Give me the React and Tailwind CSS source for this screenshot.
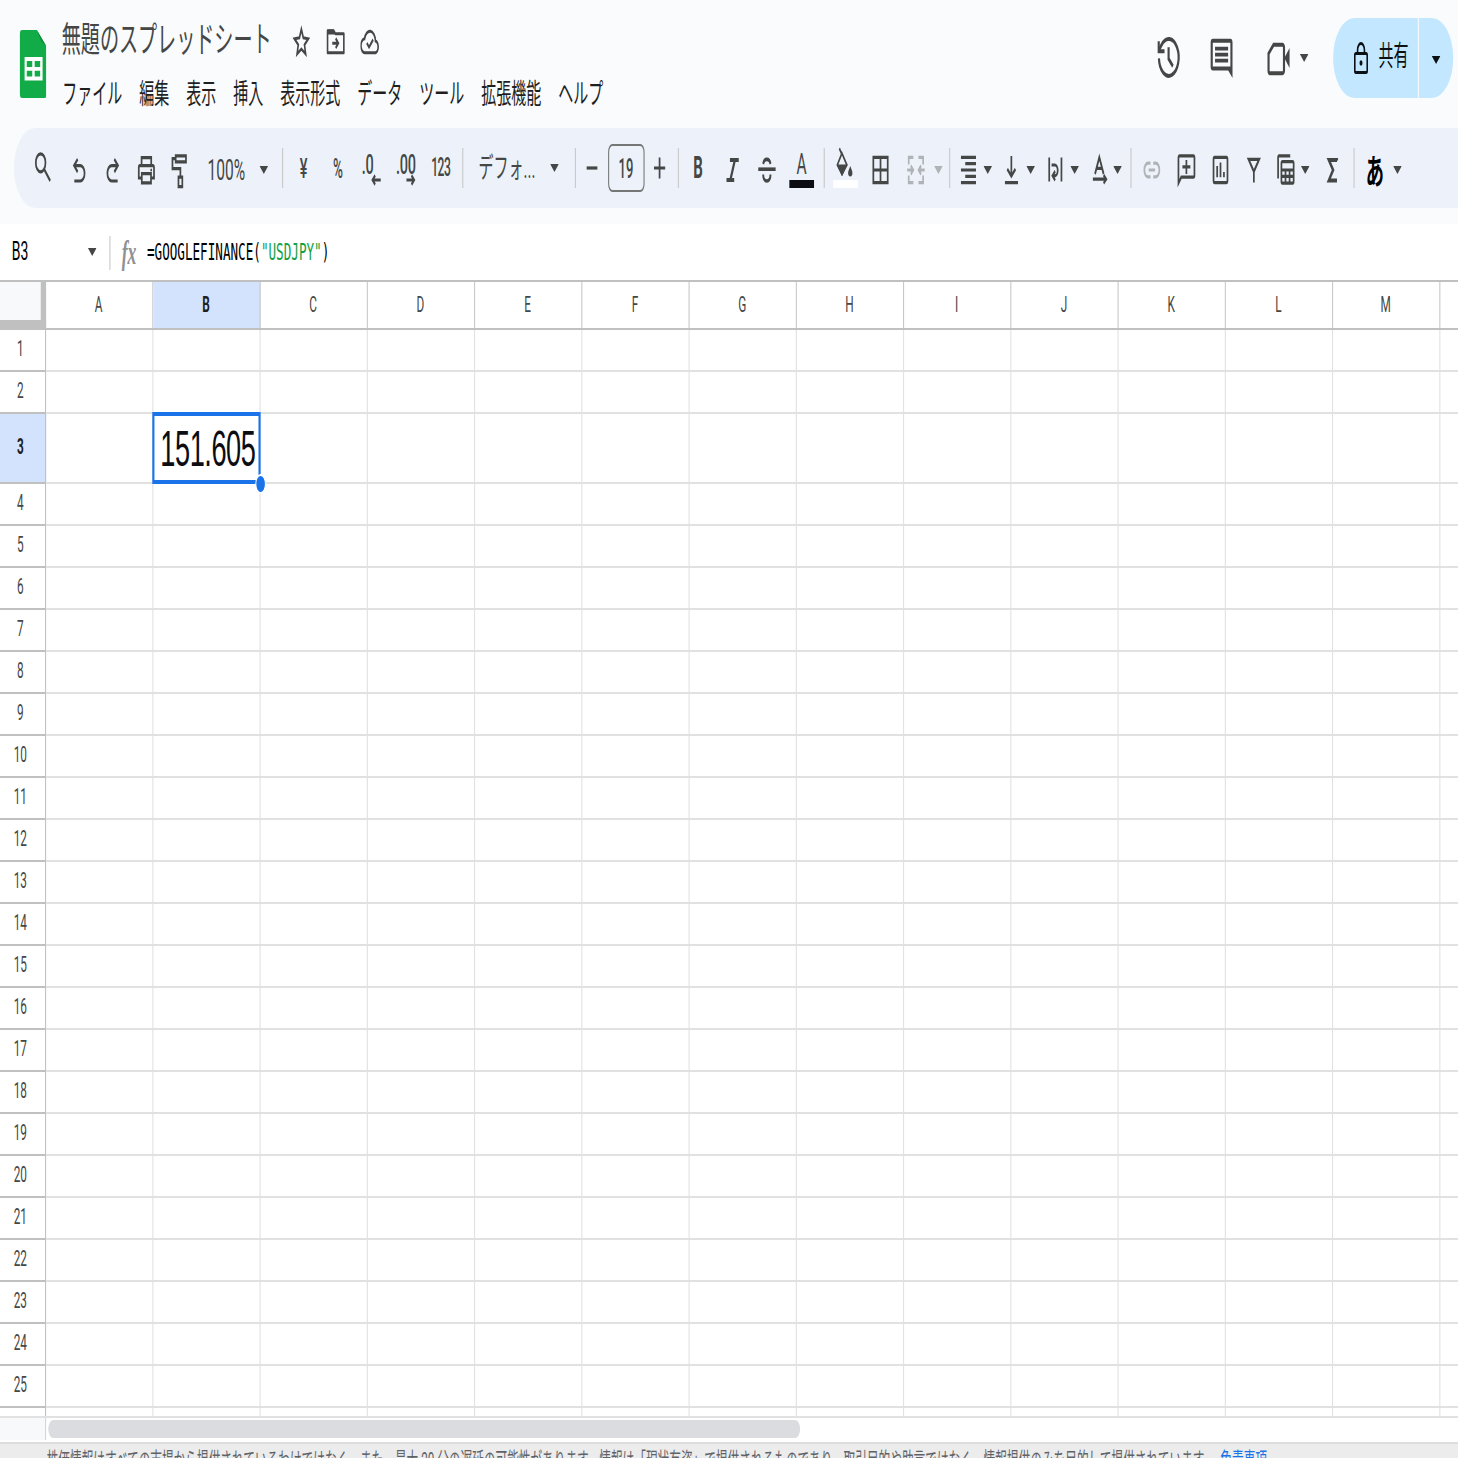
const columns = ['A', 'B', 'C', 'D', 'E', 'F', 'G', 'H', 'I', 'J', 'K', 'L', 'M', '']
const rows = Array.from({ length: 25 }, (_, i) => i + 1)
const menus = ['ファイル', '編集', '表示', '挿入', '表示形式', 'データ', 'ツール', '拡張機能', 'ヘルプ']

function Caret({ className = '' }) {
    return (
        <svg className={`h-1 w-2 shrink-0 ${className}`} viewBox="0 0 8 4" preserveAspectRatio="none" fill="currentColor">
            <path d="M0 0h8L4 4z" />
        </svg>
    )
}

function Divider({ className = '' }) {
    return <div className={`h-5 w-px shrink-0 bg-[#c7c7c7] ${className}`} />
}

// 20x20 stroked toolbar icon
function Tool({ className = '', width = 1.6, children }) {
    return (
        <svg
            className={`h-5 w-5 shrink-0 overflow-visible ${className}`}
            viewBox="0 0 20 20"
            fill="none"
            stroke="currentColor"
            strokeWidth={width}
        >
            {children}
        </svg>
    )
}

function Label({ className = '', children }) {
    return <div className={`flex h-5 shrink-0 items-center justify-center whitespace-nowrap ${className}`}>{children}</div>
}

function Header() {
    return (
        <header className="flex h-16 text-[#444746]">
            <svg className="mt-[15px] ml-[17.7px] h-[34px] w-[25.6px] shrink-0" viewBox="0 0 25 34" preserveAspectRatio="none">
                <path d="M2.5 0H16l9 8.5V32a2 2 0 0 1-2 2H2.5a2 2 0 0 1-2-2V2a2 2 0 0 1 2-2z" fill="#11ab47" />
                <path d="M16 0l9 8.5-5-3z" fill="#0b8a38" />
                <path d="M4.8 13.5h16.4v11.7H4.8zM6.8 15.5v3h5v-3zm7.2 0v3h5v-3zm-7.2 4.9v2.9h5v-2.9zm7.2 0v2.9h5v-2.9z" fill="#fff" fillRule="evenodd" />
            </svg>

            <div className="ml-[14.3px] pt-[5px]">
                <div className="flex h-7 items-center">
                    <h1 className="mt-[2px] w-[197.5px] text-[17.8px] whitespace-nowrap">無題のスプレッドシート</h1>
                    <svg className="mt-1 ml-[17px] h-[18px] w-[18px]" viewBox="0 0 18 18" fill="none" stroke="currentColor" strokeWidth="1.5">
                        <path d="M9 2.6l1.8 4.3 4.6.5-3.5 3 1.1 4.6L9 12.5 5 15l1.1-4.6-3.5-3 4.6-.5z" />
                    </svg>
                    <svg className="mt-1 ml-[14px] h-[18px] w-[18px]" viewBox="0 0 18 18" fill="none" stroke="currentColor" strokeWidth="1.5">
                        <path d="M1.4 4.4V3.4h5.8l1.5 1.5h7.9v9.5H1.4z" strokeLinejoin="round" />
                        <path d="M1.2 2.8h6l1.3 2.4H1.2z" fill="currentColor" stroke="none" />
                        <path d="M5.8 9.6h5.4M9 7.2l2.4 2.4L9 12" />
                    </svg>
                    <svg className="mt-1 ml-[14px] h-[18px] w-[18px]" viewBox="0 0 18 18" fill="none" stroke="currentColor" strokeWidth="1.5">
                        <path d="M4.2 14.4a3.5 3.5 0 0 1-.3-7 5.2 5.2 0 0 1 10.2 1.1 3 3 0 0 1 .1 5.9z" />
                        <path d="M6 9.5l2.1 2.1 3.8-3.8" />
                    </svg>
                </div>
                <nav className="ml-[0.5px] flex h-[27px] items-center gap-[15.8px] text-sm whitespace-nowrap text-[#1f1f1f]">
                    {menus.map((menu) => (
                        <span key={menu}>{menu}</span>
                    ))}
                </nav>
            </div>

            <div className="mt-[9px] mr-[4.7px] ml-auto flex h-10 items-center">
                {/* History */}
                <svg className="h-6 w-6" viewBox="0 0 24 24" fill="none" stroke="currentColor" strokeWidth="2">
                    <path d="M2.6 12.2a9.2 9.2 0 1 0 2.3-6.6L2.4 8.3" />
                    <path d="M2.4 3.6v5h5.4M11.6 6.6v5.8l4 3.7" />
                </svg>
                {/* Comments */}
                <svg className="ml-[25px] h-6 w-6" viewBox="0 0 24 24" fill="currentColor">
                    <path d="M3.8 2.4h16.4a2 2 0 0 1 2 2V22l-4-3.8H3.8a2 2 0 0 1-2-2V4.4a2 2 0 0 1 2-2zm0 2v11.8h16.4V4.4z" fillRule="evenodd" />
                    <path d="M5.9 6.4h12.2v1.9H5.9zM5.9 9.4h12.2v1.9H5.9zM5.9 12.4h12.2v1.9H5.9z" />
                </svg>
                {/* Meet */}
                <svg className="ml-[29.5px] h-6 w-6" viewBox="0 0 24 24" fill="none" stroke="currentColor" strokeWidth="2">
                    <path d="M7.5 5.4h8.3a1.4 1.4 0 0 1 1.4 1.4v11.4a1.4 1.4 0 0 1-1.4 1.4H4a1.2 1.2 0 0 1-1.2-1.2V9.8z" />
                    <path d="M17.5 12l4.9-5v10z" fill="currentColor" stroke="none" />
                </svg>
                <Caret className="ml-[8px]" />
                <button className="ml-[23px] flex h-10 w-[112px] items-center rounded-full bg-[#c2e7ff] text-sm text-[#0b1015]">
                    <svg className="mb-px ml-[17.5px] h-4 w-4" viewBox="0 0 16 16" fill="none" stroke="currentColor" strokeWidth="1.5">
                        <rect x="2.2" y="5.7" width="11.6" height="9.5" rx="1" />
                        <path d="M4.8 5.7V4a3.2 3.2 0 0 1 6.4 0v1.7" />
                        <circle cx="8" cy="10.5" r="1.4" fill="currentColor" stroke="none" />
                    </svg>
                    <span className="mb-[1.5px] ml-[8.5px] w-[28px] whitespace-nowrap">共有</span>
                    <span className="ml-[9px] h-full w-px bg-[#f9fbfd]" />
                    <Caret className="mt-px ml-[12px]" />
                </button>
            </div>
        </header>
    )
}

function Toolbar() {
    return (
        <div className="ml-[13px] flex h-10 items-center rounded-l-full bg-[#edf2fa] font-[Roboto,'Noto_Sans_CJK_JP',sans-serif] text-[#444746]">
            <Tool className="ml-[16.6px]">
                <circle cx="7.9" cy="7.4" r="4.5" />
                <path d="M11.1 10.6l5.7 5.8" />
            </Tool>
            <Tool className="ml-[14px]">
                <path d="M5.3 16.5h5.7a3.85 3.85 0 0 0 0-7.7H5M8.4 5.6L5.1 8.8l3.3 3.2" />
            </Tool>
            <Tool className="ml-[11.2px]">
                <path d="M14.7 16.5H9a3.85 3.85 0 0 1 0-7.7h6M11.6 5.6l3.3 3.2-3.3 3.2" />
            </Tool>
            <Tool className="ml-[11.2px]">
                <path d="M6 8.6V4.8h9v3.8M6.1 15H3.4v-5.2a1 1 0 0 1 1-1h12.2a1 1 0 0 1 1 1V15h-2.7" />
                <path d="M6.2 12.8h8.6v4.6H6.2z" />
                <circle cx="15" cy="11" r=".8" fill="currentColor" stroke="none" />
            </Tool>
            <Tool className="ml-[11.5px]">
                <path d="M6.8 3.9h9.6v3H6.8zM6.5 5.3H3.8v5h7.4v4.2M9.4 14.6h3.6v4.7H9.4z" />
            </Tool>
            <Label className="mt-[3px] ml-[15px] w-[37px] text-[14.5px]">100%</Label>
            <Caret className="mt-px ml-[12.8px]" />
            <Divider className="ml-[13.1px]" />

            <Label className="ml-[8.8px] w-5 text-[13.5px] font-medium">¥</Label>
            <Label className="ml-[11.8px] w-5 text-[14px] font-medium">
                <span className="scale-x-90">%</span>
            </Label>
            <div className="relative ml-[11.8px] h-5 w-5">
                <span className="absolute top-0 left-[0.5px] text-[13.5px] leading-[17px] font-medium tracking-[-0.3px]">.0</span>
                <Tool className="absolute inset-0">
                    <path d="M18 16H10.5M12.8 13.7L10.4 16l2.4 2.3" />
                </Tool>
            </div>
            <div className="relative ml-[12px] h-5 w-5">
                <span className="absolute top-0 left-[0.5px] text-[13.5px] leading-[17px] font-medium tracking-[-0.3px]">.00</span>
                <Tool className="absolute inset-0">
                    <path d="M10 16h7M14.7 13.7l2.4 2.3-2.4 2.3" />
                </Tool>
            </div>
            <Label className="mt-px ml-[11.7px] w-5 text-[12.5px] font-medium tracking-[-0.5px]">
                <span className="scale-x-90">123</span>
            </Label>
            <Divider className="ml-[10.5px]" />

            <Label className="ml-[15.2px] w-[51px] text-sm">デフォ...</Label>
            <Caret className="ml-[14.4px]" />
            <Divider className="ml-[15px]" />

            <Tool className="ml-[5.2px]">
                <path d="M5 10h10" />
            </Tool>
            <Label className="ml-[5.3px] h-6 w-[34px] rounded border border-[#747775] text-[13.5px] font-medium">
                <span className="scale-x-90">19</span>
            </Label>
            <Tool className="ml-[4px]">
                <path d="M4.8 10h10.4M10 4.8v10.4" />
            </Tool>
            <Divider className="ml-[6.9px]" />

            <Label className="mt-[2px] ml-[8.5px] w-5 text-[15.5px] font-bold">
                <span className="scale-x-90">B</span>
            </Label>
            <Tool className="ml-[11.6px]" width={2}>
                <path d="M7.6 6h8.2M4.4 16h7.2M12.2 6L8 16" />
            </Tool>
            <Tool className="ml-[11.8px]" width={1.8}>
                <path d="M2 10.6h16.2" />
                <path d="M13.4 8a3.5 3 0 0 0-6.8 0M6.6 13.2c0 2 1.3 3.3 3.4 3.3s3.4-1.3 3.4-3.3" />
            </Tool>
            <div className="ml-[10.7px] flex h-5 w-6 flex-col items-center justify-between">
                <span className="pt-px text-[14.5px] leading-[16px]">A</span>
                <span className="-mt-px h-1 w-[23px] shrink-0 bg-[#0b0d12]" />
            </div>
            <Divider className="ml-[8.2px]" />
            <div className="ml-[7.4px] flex h-5 w-6 flex-col items-center justify-between">
                <svg className="h-4 w-6 overflow-visible" viewBox="0 0 24 16" fill="none" stroke="currentColor" strokeWidth="1.4">
                    <path d="M6.6.2l2.6 3.2M9 2.6L4.8 8.4 9 13l4.6-4.6z" />
                    <path d="M4.2 8.3h9.8L9.4 14H9z" fill="currentColor" stroke="none" />
                    <path d="M16.8 9c1.1 1.6 2 2.5 2 3.5a2 1.7 0 0 1-4 0c0-1 .9-1.9 2-3.5z" fill="currentColor" stroke="none" />
                </svg>
                <span className="h-1 w-[23px] bg-white" />
            </div>
            <Tool className="ml-[11.1px]">
                <path d="M3.3 4.7h13.4v12.6H3.3zM10 4.7v12.6M3.3 11h13.4" />
            </Tool>
            <Tool className="ml-[13.2px] text-[#b0b3b6]">
                <path d="M7.6 4.7H3.3v3.6M3.3 13.7v3.6h4.3M12.4 4.7h4.3v3.6M16.7 13.7v3.6h-4.3M1.8 11h5.4M5.2 8.8L7.4 11l-2.2 2.2M18.2 11h-5.4M14.8 8.8L12.6 11l2.2 2.2" />
            </Tool>
            <Caret className="mt-[2px] ml-[6.8px] text-[#b0b3b6]" />
            <Divider className="ml-[6.2px]" />

            <Tool className="ml-[6.6px]">
                <path d="M3 4.7h14M7 7.8h10M3 11h14M7 14.2h10M3 17.3h14" />
            </Tool>
            <Caret className="mt-[2px] ml-[3.6px]" />
            <Tool className="ml-[8.8px]">
                <path d="M10 4v10M6.2 10.5l3.8 3.6 3.8-3.6M4 17.3h12.2" />
            </Tool>
            <Caret className="mt-[2px] ml-[4px]" />
            <Tool className="ml-[9px]">
                <path d="M4.3 4.8v12M15.7 4.8v12M6.5 8.5h3a2.7 2.7 0 0 1 0 5.4H7.6M9.8 11.6l-2.4 2.3 2.4 2.3" />
            </Tool>
            <Caret className="mt-[2px] ml-[3.5px]" />
            <Tool className="ml-[9.3px]">
                <path d="M6 13L10 4.6 14 13M7.3 10.2h5.4M4 15.6h12.2M14 13.5l2.4 2.1-2.4 2.1" />
            </Tool>
            <Caret className="mt-[2px] ml-[3.2px]" />
            <Divider className="ml-[8px]" />

            <Tool className="ml-[9px] text-[#b0b3b6]">
                <path d="M8.7 7.6H6.4a3.4 3.4 0 0 0 0 6.8h2.3M11.3 7.6h2.3a3.4 3.4 0 0 1 0 6.8h-2.3M7 11h6" />
            </Tool>
            <Tool className="ml-[11.6px]">
                <path d="M2.8 17.6V4.9a1 1 0 0 1 1-1h12.9a1 1 0 0 1 1 1v8.7a1 1 0 0 1-1 1H5.4zM10.2 6v7M6.5 9.4h7.4" />
            </Tool>
            <Tool className="ml-[11.7px]">
                <rect x="3.5" y="4.7" width="13" height="12.6" rx="1" />
                <path d="M6.9 9v5.6M10 7.2v7.4M13.2 12v2.6" />
            </Tool>
            <Tool className="ml-[11.6px]">
                <path d="M5.2 5.7h9.8L10.1 11.8zM10.1 11v6.2" />
            </Tool>
            <Tool className="ml-[9.8px]">
                <path d="M14 3.9H3.7a1 1 0 0 0-1 1v10.3" />
                <rect x="5.8" y="6.8" width="11.4" height="10.8" rx="1" />
                <path d="M5.8 11h11.4M5.8 14.2h11.4M9.6 11v6.6M13.4 11v6.6" />
            </Tool>
            <Caret className="mt-[2px] ml-[3.6px]" />
            <Tool className="ml-[11.1px]" width={2}>
                <path d="M14.6 6.2V6H7l4 5-4 5.2h7.6" />
            </Tool>
            <Divider className="ml-[10.6px]" />
            <Label className="mt-[5px] ml-[8.8px] w-5 text-[17px] font-bold text-black">あ</Label>
            <Caret className="mt-[2px] ml-[6.8px]" />
        </div>
    )
}

function FormulaBar() {
    return (
        <div className="mt-2 flex h-7 items-center bg-white text-[13px] text-black">
            <span className="ml-[11px] w-[70.5px]">B3</span>
            <Caret className="text-[#444746]" />
            <span className="ml-[12px] h-[17px] w-px bg-[#c7c7c7]" />
            <span className="mt-[2px] ml-[11px] w-[23.5px] font-['Liberation_Serif',serif] text-[16.5px] leading-none font-bold text-[#8e9194] italic">fx</span>
            <span className="mt-[1.5px] font-['DejaVu_Sans_Mono',monospace] text-[11.77px] whitespace-pre">
                =GOOGLEFINANCE(<span className="text-[#11a246]">"USDJPY"</span>)
            </span>
        </div>
    )
}

function Cell({ row, column }) {
    if (row !== 3 || column !== 'B') {
        return <div className="w-[100px] shrink-0 border-r border-[#e1e1e1]" />
    }
    return (
        <div className="relative flex w-[100px] shrink-0 items-center justify-end border-r border-[#e1e1e1] pt-[1.5px] pr-[3.8px] font-['Liberation_Sans',sans-serif] text-[25.33px] leading-none tracking-[-0.4px] text-[#0b0d12]">
            151.605
            <div className="absolute -top-px -right-px -bottom-px -left-px border-2 border-[#1a73e8]" />
            <div className="absolute -right-[5.5px] -bottom-[6px] h-[10px] w-[10px] rounded-full border border-white bg-[#1a73e8]" />
        </div>
    )
}

function Sheet() {
    return (
        <div className="h-[569px] overflow-hidden border-y border-t-[#c0c0c0] border-b-[#e1e1e1] bg-white text-[11px] text-[#444746]">
            {/* Column headers */}
            <div className="flex h-6 border-b border-[#c0c0c0]">
                <div className="w-[43px] shrink-0 border-r-[5px] border-b-4 border-[#c0c0c0] bg-[#f8f9fa]" />
                {columns.map((column) => (
                    <div
                        key={column}
                        className={`flex w-[100px] shrink-0 items-center justify-center border-r border-[#c7c7c7] pt-[2px] pr-px ${column === 'B' ? 'bg-[#d3e3fd] font-bold text-[#1f1f1f]' : ''}`}
                    >
                        {column}
                    </div>
                ))}
            </div>

            {rows.map((row) => (
                <div key={row} className={`flex ${row === 3 ? 'h-[35px]' : 'h-[21px]'}`}>
                    <div
                        className={`flex w-[43px] shrink-0 items-center justify-center border-r border-b border-[#c0c0c0] pr-1 ${row === 3 ? 'bg-[#d3e3fd] font-bold text-[#1f1f1f]' : ''}`}
                    >
                        {row}
                    </div>
                    <div className="flex border-b border-[#e1e1e1]">
                        {columns.map((column) => (
                            <Cell key={column} row={row} column={column} />
                        ))}
                    </div>
                </div>
            ))}

            <div className="flex h-[21px]">
                <div className="w-[43px] shrink-0 border-r border-[#c0c0c0]" />
                {columns.map((column) => (
                    <Cell key={column} column={column} />
                ))}
            </div>
        </div>
    )
}

export default function App() {
    return (
        <div className="h-[1458px] w-[1458px] overflow-hidden">
            <div className="flex h-[729px] w-[1360px] origin-top-left scale-x-[1.0725] scale-y-[2] flex-col overflow-hidden bg-[#f9fbfd] font-[Roboto,'Noto_Sans_CJK_JP',sans-serif]">
                <Header />
                <Toolbar />
                <FormulaBar />
                <Sheet />

                {/* Horizontal scrollbar */}
                <div className="flex h-3 shrink-0 bg-white">
                    <div className="h-[11px] w-[43px] border-r border-[#d5d5d5] bg-[#f8f9fa]" />
                    <div className="mt-px ml-[2px] h-[9px] w-[701px] rounded-full bg-[#dadce0]" />
                </div>

                <footer className="h-2 shrink-0 border-t border-[#dcdedd] bg-[#ececec] pt-[2px] pl-[43.5px] text-[10.88px] leading-[14px] whitespace-nowrap text-[#5f6368]">
                    株価情報はすべての市場から提供されているわけではなく、また、最大 20 分の遅延の可能性があります。情報は「現状有姿」で提供されるものであり、取引目的や助言ではなく、情報提供のみを目的して提供されています。
                    <span className="ml-[5px] text-[#1a73e8]">免責事項</span>
                </footer>
            </div>
        </div>
    )
}
